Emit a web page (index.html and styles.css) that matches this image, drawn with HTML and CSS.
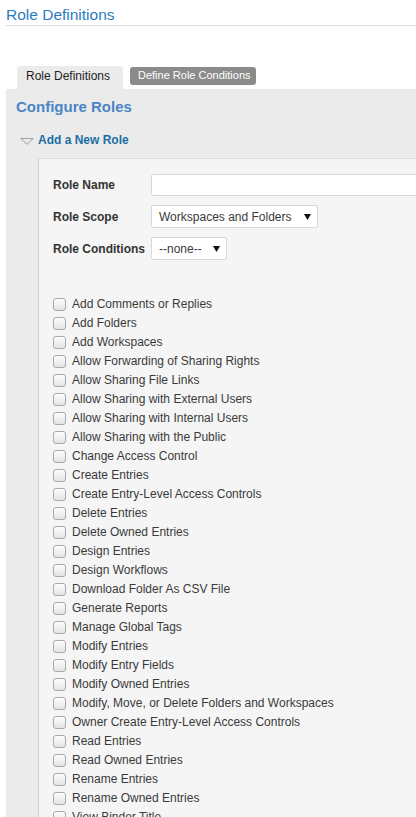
FILE: index.html
```html
<!DOCTYPE html>
<html>
<head>
<meta charset="utf-8">
<link rel="stylesheet" href="styles.css">
</head>
<body>
<div class="page">
  <div class="header"><h1 class="title">Role Definitions</h1></div>
  <div class="tabs">
    <div class="tab tab-active">Role Definitions</div>
    <div class="tab tab-other">Define Role Conditions</div>
  </div>
  <div class="panel">
    <h2 class="panel-title">Configure Roles</h2>
    <div class="toggle">
      <svg class="toggle-icon" width="14" height="7" viewBox="0 0 14 7"><path d="M0.7 0.5 L13.3 0.5 L7 6.3 Z" fill="none" stroke="#a0a0a0" stroke-width="1"/></svg>
      <span class="toggle-label">Add a New Role</span>
    </div>
    <div class="inner">
      <div class="form-row">
        <div class="label">Role Name</div>
        <div class="input"></div>
      </div>
      <div class="form-row">
        <div class="label">Role Scope</div>
        <div class="select select-scope"><span>Workspaces and Folders</span><svg class="arrow" width="7" height="6" viewBox="0 0 7 6"><path d="M0 0 L7 0 L3.5 6 Z" fill="#111"/></svg></div>
      </div>
      <div class="form-row">
        <div class="label">Role Conditions</div>
        <div class="select select-cond"><span>--none--</span><svg class="arrow" width="7" height="6" viewBox="0 0 7 6"><path d="M0 0 L7 0 L3.5 6 Z" fill="#111"/></svg></div>
      </div>
      <ul class="rights">
        <li><span class="cb"></span>Add Comments or Replies</li>
        <li><span class="cb"></span>Add Folders</li>
        <li><span class="cb"></span>Add Workspaces</li>
        <li><span class="cb"></span>Allow Forwarding of Sharing Rights</li>
        <li><span class="cb"></span>Allow Sharing File Links</li>
        <li><span class="cb"></span>Allow Sharing with External Users</li>
        <li><span class="cb"></span>Allow Sharing with Internal Users</li>
        <li><span class="cb"></span>Allow Sharing with the Public</li>
        <li><span class="cb"></span>Change Access Control</li>
        <li><span class="cb"></span>Create Entries</li>
        <li><span class="cb"></span>Create Entry-Level Access Controls</li>
        <li><span class="cb"></span>Delete Entries</li>
        <li><span class="cb"></span>Delete Owned Entries</li>
        <li><span class="cb"></span>Design Entries</li>
        <li><span class="cb"></span>Design Workflows</li>
        <li><span class="cb"></span>Download Folder As CSV File</li>
        <li><span class="cb"></span>Generate Reports</li>
        <li><span class="cb"></span>Manage Global Tags</li>
        <li><span class="cb"></span>Modify Entries</li>
        <li><span class="cb"></span>Modify Entry Fields</li>
        <li><span class="cb"></span>Modify Owned Entries</li>
        <li><span class="cb"></span>Modify, Move, or Delete Folders and Workspaces</li>
        <li><span class="cb"></span>Owner Create Entry-Level Access Controls</li>
        <li><span class="cb"></span>Read Entries</li>
        <li><span class="cb"></span>Read Owned Entries</li>
        <li><span class="cb"></span>Rename Entries</li>
        <li><span class="cb"></span>Rename Owned Entries</li>
        <li><span class="cb"></span>View Binder Title</li>
        <li><span class="cb"></span>View Entries</li>
      </ul>
    </div>
  </div>
</div>
</body>
</html>
```
FILE: styles.css
```css
html, body {
  margin: 0;
  padding: 0;
  overflow: hidden;
  background: #fff;
}
body {
  font-family: "Liberation Sans", Arial, sans-serif;
  color: #333;
}
.page {
  padding-left: 6px;
  width: 700px;
}
.header {
  padding-top: 5px;
  border-bottom: 1px solid #dcdcdc;
  width: 410px;
}
.title {
  margin: 0;
  font-size: 15.5px;
  line-height: 20px;
  font-weight: normal;
  color: #2b7cbf;
}
.tabs {
  display: flex;
  align-items: flex-start;
  margin-top: 40px;
  padding-left: 11px;
}
.tab {
  box-sizing: border-box;
}
.tab-active {
  height: 23px;
  padding: 3px 11px 0 9px;
  font-size: 12px;
  line-height: 14px;
  color: #1e1e1e;
  background: #ebebeb;
  border-radius: 3px 3px 0 0;
  width: 106px;
}
.tab-other {
  margin-left: 7px;
  margin-top: 1px;
  height: 18px;
  padding: 2px 8px 0 8px;
  font-size: 11px;
  line-height: 13px;
  color: #fff;
  background: #8b8b8b;
  border-radius: 3px;
  width: 126px;
  white-space: nowrap;
}
.panel {
  background: #ebebeb;
  padding: 9px 0 0 10px;
}
.panel-title {
  margin: 0;
  font-size: 15px;
  line-height: 18px;
  font-weight: bold;
  color: #4a85c6;
}
.toggle {
  display: flex;
  align-items: center;
  margin-top: 17px;
  height: 14px;
  padding-left: 4px;
}
.toggle-icon {
  display: block;
  margin-top: 2px;
}
.toggle-label {
  margin-left: 4px;
  font-size: 12px;
  line-height: 14px;
  font-weight: bold;
  color: #1b6ea6;
}
.inner {
  margin-top: 11px;
  margin-left: 22px;
  background: #f5f5f5;
  border-top: 1px solid #dcdcdc;
  border-left: 1px solid #d0d0d0;
  padding: 15px 0 0 14px;
}
.form-row {
  display: flex;
  align-items: center;
  margin-bottom: 9px;
}
.label {
  width: 98px;
  font-size: 12px;
  font-weight: bold;
  color: #333;
}
.input {
  box-sizing: border-box;
  width: 400px;
  height: 22px;
  background: #fff;
  border: 1px solid #d8d8d8;
  border-radius: 2px;
}
.select {
  box-sizing: border-box;
  height: 23px;
  display: flex;
  align-items: center;
  justify-content: space-between;
  padding: 0 6px 0 7px;
  background: #fff;
  border: 1px solid #d8d8d8;
  border-radius: 2px;
  font-size: 12px;
  color: #3a3a3a;
}
.select-scope { width: 167px; }
.select-cond { width: 76px; }
.arrow { display: block; }
.rights {
  list-style: none;
  margin: 35px 0 0 0;
  padding: 0;
}
.rights li {
  display: flex;
  align-items: flex-start;
  height: 19px;
  font-size: 12px;
  line-height: 19px;
  color: #3a3a3a;
  white-space: nowrap;
}
.cb {
  box-sizing: border-box;
  width: 13px;
  height: 13px;
  margin-top: 3px;
  margin-right: 6px;
  border: 1px solid #a9a9a9;
  border-radius: 3px;
  background: linear-gradient(#fdfdfd, #e4e4e4);
}
```
